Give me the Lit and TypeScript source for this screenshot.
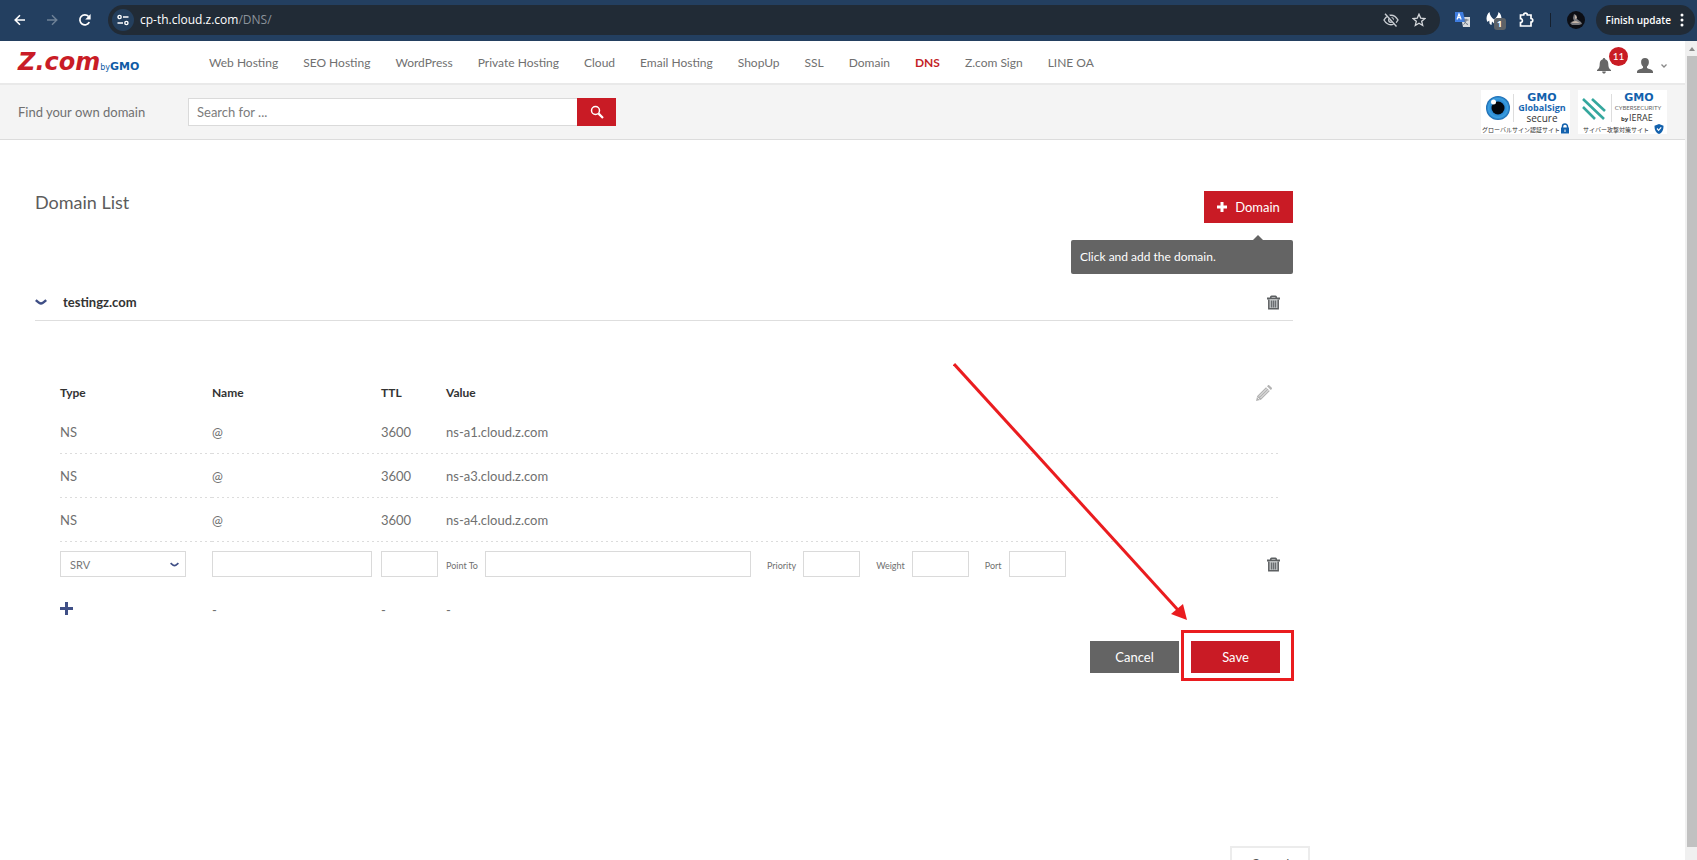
import { LitElement, html, css, svg } from "lit";
import { customElement, state } from "lit/decorators.js";
import { classMap } from "lit/directives/class-map.js";

const SITE_FONT = css`"Century Gothic", Lato, sans-serif`;

const trashIcon = svg`<path fill="#5d6062" d="M4.500 0h4a1.500 1.500 0 0 1 1.500 1.500V2h3v2H0V2h3v-.500A1.500 1.500 0 0 1 4.500 0zM4.600 1.400V2h3.800v-.600z"/><path fill="#c9ccce" stroke="#5d6062" stroke-width="1.500" d="M1.800 4v9.200h9.400V4"/><path fill="none" stroke="#6a6e71" stroke-width="1.400" d="M4.500 5v7M6.500 5v7M8.500 5v7"/>`;

@customElement("browser-bar")
class BrowserBar extends LitElement {
  static styles = css`
    :host {
      display: flex;
      align-items: center;
      height: 41px;
      padding: 0 2px 2px 14px;
      box-sizing: border-box;
      background: #233f60;
      color: #fff;
      font-family: "Open Sans", sans-serif;
    }
    button {
      display: flex;
      padding: 0;
      border: 0;
      background: none;
      color: inherit;
      font: inherit;
    }
    .history {
      display: flex;
      align-items: center;
      gap: 20px;
      margin-right: 16px;
    }
    .address {
      display: flex;
      flex: 1;
      align-items: center;
      height: 30px;
      margin-right: 15px;
      padding: 0 14px 0 4px;
      border-radius: 15px;
      background: #212b36;
    }
    .site {
      align-items: center;
      justify-content: center;
      width: 22px;
      height: 22px;
      border-radius: 50%;
      background: #243f5d;
    }
    .url {
      flex: 1;
      min-width: 0;
      margin: 0 6px;
      font-size: 12px;
      line-height: 20px;
    }
    .path {
      color: #8c939b;
    }
    .marks {
      display: flex;
      gap: 13px;
    }
    .tools {
      display: flex;
      align-items: center;
      gap: 16px;
    }
    .counted {
      position: relative;
    }
    .count {
      position: absolute;
      left: 8px;
      top: 6px;
      width: 12px;
      height: 12px;
      border-radius: 3px;
      background: #5d6267;
      font-size: 9px;
      font-weight: 700;
      line-height: 12px;
    }
    .divider {
      width: 1px;
      height: 14px;
      background: #15202e;
    }
    .update {
      align-items: center;
      gap: 9px;
      height: 30px;
      margin-left: -5px;
      padding: 0 11px 0 10px;
      border-radius: 15px;
      background: #212b36;
      font-size: 10px;
      font-weight: 600;
    }
  `;

  render() {
    return html`
      <div class="history">
        <button aria-label="Back">
          <svg width="12" height="12" viewBox="0 0 12 12" fill="none" stroke="#fff" stroke-width="1.600"><path d="M11 6H1.500M6 1.200L1.200 6L6 10.800" /></svg>
        </button>
        <button aria-label="Forward">
          <svg width="12" height="12" viewBox="0 0 12 12" fill="none" stroke="#6f8297" stroke-width="1.400"><path d="M1 6h9.500M6 1.200L10.800 6L6 10.800" /></svg>
        </button>
        <button aria-label="Reload">
          <svg width="14" height="14" viewBox="0 0 14 14"><path fill="none" stroke="#fff" stroke-width="1.700" d="M11.300 9.200A5 5 0 1 1 10.600 3.500" /><path fill="#fff" d="M12.600 1v5.400H7.200z" /></svg>
        </button>
      </div>
      <div class="address">
        <button class="site" aria-label="Site information">
          <svg width="12" height="12" viewBox="0 0 12 12" fill="none" stroke="#fff" stroke-width="1.400"><circle cx="2.600" cy="3" r="1.600" /><path d="M6 3h5.500M.5 9h5.500" /><circle cx="9.400" cy="9" r="1.600" /></svg>
        </button>
        <div class="url">cp-th.cloud.z.com<span class="path">/DNS/</span></div>
        <div class="marks">
          <button aria-label="Third-party cookies blocked">
            <svg width="16" height="14" viewBox="0 0 16 14" fill="none" stroke="#c9cdd2" stroke-width="1.400"><path d="M1 7C3 3.500 5.300 2.200 8 2.200S13 3.500 15 7c-2 3.500-4.300 4.800-7 4.800S3 10.500 1 7z" /><circle cx="8" cy="7" r="2.300" /><path stroke="#212b36" stroke-width="3" d="M3 .5l11 12.500" /><path d="M2 .8l11.500 12.700" /></svg>
          </button>
          <button aria-label="Bookmark this tab">
            <svg width="14" height="14" viewBox="0 0 14 14" fill="none" stroke="#d5d8dc" stroke-width="1.300"><path d="M7 1.200l1.700 3.900 4.200.4-3.200 2.800 1 4.200L7 10.300l-3.700 2.200 1-4.200L1.100 5.500l4.200-.4z" /></svg>
          </button>
        </div>
      </div>
      <div class="tools">
        <button aria-label="Translate">
          <svg width="15" height="15" viewBox="0 0 15 15"><path fill="#d8dbdf" d="M6 5h9v10H8z" /><path fill="#3f7de0" d="M0 0h8l2.500 10H0z" /><path fill="none" stroke="#fff" stroke-width="1.200" d="M2 7.500L4 2l2.200 5.500M2.800 5.700h2.600" /><path fill="none" stroke="#68727e" d="M8.500 8h5M11 6.800V8c0 2-1 3.500-2.500 4.500M9.500 9.500c.8 1.500 2 2.500 3.500 3" /></svg>
        </button>
        <button class="counted" aria-label="Protection extension">
          <svg width="16" height="15" viewBox="0 0 16 15"><path fill="#fff" d="M3.500 0C3.800 3 5.500 5.500 8 7.500 10.500 5.500 12.200 3 12.500 0 15 2 15.500 4.500 15.500 7L11 14l-1-4.500L8 11.500 6 9.500 5.500 13C4.800 12.800 4 12.300 3.600 11.800L3.200 8.500 1.500 10C.8 8.800.5 7.600.5 6.500.500 4 1.500 1.500 3.500 0z" /></svg>
          <span class="count">1</span>
        </button>
        <button aria-label="Extensions">
          <svg width="16" height="16" viewBox="0 0 16 16" fill="none" stroke="#fff" stroke-width="1.700"><path d="M2.500 3h3.200c0-2.400 3.600-2.400 3.600 0h3.700v3.500c2.300 0 2.300 3.500 0 3.500v4H2.500v-3.300c2.500 0 2.500-4 0-4z" /></svg>
        </button>
        <span class="divider"></span>
        <button aria-label="Profile">
          <svg width="18" height="18" viewBox="0 0 18 18"><circle cx="9" cy="9" r="9" fill="#0c0e14" /><path fill="#77787d" d="M7 3l2 1 1 4 4 3 1 2-3 1H5l-2-2 4-2-1-3z" /><path fill="#c4b5a8" d="M8 5l1-1 1 3-2 1zM4 11l5-1 4 2H6z" /></svg>
        </button>
        <button class="update">
          Finish update
          <svg width="4" height="14" viewBox="0 0 4 14" fill="#fff"><circle cx="2" cy="2" r="1.500" /><circle cx="2" cy="7" r="1.500" /><circle cx="2" cy="12" r="1.500" /></svg>
        </button>
      </div>
    `;
  }
}

@customElement("site-header")
class SiteHeader extends LitElement {
  static styles = css`
    :host {
      display: block;
      color: #707070;
      font-family: ${SITE_FONT};
    }
    a {
      color: inherit;
      text-decoration: none;
    }
    button {
      padding: 0;
      border: 0;
      background: none;
    }
    .top {
      display: flex;
      align-items: center;
      height: 42px;
      padding: 0 18px;
      border-bottom: 2px solid #e9e9e9;
      background: #fff;
    }
    .logo {
      display: flex;
      align-items: baseline;
      width: 191px;
      flex: none;
      color: #0f5ba5;
      font-family: "DejaVu Sans", sans-serif;
      font-weight: 700;
    }
    .brand {
      color: #c91c26;
      font-size: 24px;
      font-style: italic;
      line-height: 30px;
    }
    .by {
      font-size: 8px;
      font-weight: 400;
    }
    .group {
      font-size: 11px;
    }
    nav {
      display: flex;
      flex: 1;
      gap: 25px;
      padding-top: 2px;
      font-size: 12px;
      line-height: 20px;
      white-space: nowrap;
    }
    .current {
      color: #c31f28;
      font-weight: 700;
    }
    .account {
      display: flex;
      align-items: center;
      gap: 26px;
      padding-top: 8px;
    }
    .account button {
      display: flex;
      position: relative;
      align-items: center;
      gap: 8px;
    }
    .badge {
      position: absolute;
      left: 12px;
      top: -11px;
      width: 19px;
      height: 19px;
      border-radius: 50%;
      background: #c91c24;
      color: #fff;
      font: 10px/19px ${SITE_FONT};
      text-align: center;
    }
    .finder {
      display: flex;
      align-items: center;
      height: 54px;
      padding: 0 18px;
      border-bottom: 1px solid #dcdcdc;
      background: #f4f4f4;
    }
    label {
      width: 170px;
      flex: none;
      font-size: 13px;
    }
    .search {
      display: flex;
      height: 28px;
      flex: 0 1 428px;
    }
    input {
      flex: 1;
      min-width: 0;
      box-sizing: border-box;
      padding: 0 8px;
      border: 1px solid #dadada;
      border-right: 0;
      border-radius: 0;
      background: #fff;
      font: 13px ${SITE_FONT};
    }
    input::placeholder {
      color: #7c7c7c;
      opacity: 1;
    }
    .go {
      display: flex;
      align-items: center;
      justify-content: center;
      width: 39px;
      background: #c91b25;
    }
    .seals {
      display: flex;
      gap: 8px;
      margin-left: auto;
    }
    .seals svg {
      display: block;
      background: #fff;
    }
    .wide {
      font: 700 11px "DejaVu Sans", sans-serif;
      fill: #1261ad;
    }
    .sign {
      font: 700 9px "Open Sans", sans-serif;
      fill: #1867b2;
    }
    .secure {
      font: 10px "Open Sans", sans-serif;
      fill: #333;
    }
    .cyber {
      font: 6px Lato, sans-serif;
      fill: #666;
    }
    .bylabel {
      font: 700 6px "Open Sans", sans-serif;
      fill: #333;
    }
    .ierae {
      font: 9px "Open Sans", sans-serif;
      fill: #333;
    }
    .jp {
      font: 6px "Noto Sans CJK JP", sans-serif;
      fill: #333;
    }
  `;

  private items = ["Web Hosting", "SEO Hosting", "WordPress", "Private Hosting", "Cloud", "Email Hosting", "ShopUp", "SSL", "Domain", "DNS", "Z.com Sign", "LINE OA"];

  render() {
    return html`
      <header class="top">
        <a class="logo" href="#"><span class="brand">Z.com</span><span class="by">by</span><span class="group">GMO</span></a>
        <nav>${this.items.map((name) => html`<a href="#" class=${classMap({ current: name === "DNS" })}>${name}</a>`)}</nav>
        <div class="account">
          <button aria-label="Notifications">
            <svg width="14" height="16" viewBox="0 0 14 16" fill="#666"><path d="M7 0c.9 0 1.200.6 1.200 1.300C10.500 2 11.300 4 11.300 6c0 3 .7 4.700 2.700 6v1H0v-1c2-1.300 2.700-3 2.700-6 0-2 .8-4 3.100-4.700C5.800.6 6.100 0 7 0zM5.200 13.600h3.600C8.800 15 8 15.600 7 15.600s-1.800-.6-1.800-2z" /></svg>
            <span class="badge">11</span>
          </button>
          <button aria-label="Account">
            <svg width="16" height="16" viewBox="0 0 16 16" fill="#666"><path d="M8 0c2.500 0 3.900 1.600 3.900 4 0 2-.8 3.700-1.900 4.600v1.500c1 1 6 1.200 6 3.900v1H0v-1c0-2.700 5-2.900 6-3.900V8.600C4.900 7.700 4.100 6 4.100 4 4.100 1.600 5.500 0 8 0z" /></svg>
            <svg width="6" height="4" viewBox="0 0 6 4" fill="none" stroke="#888" stroke-width="1.300"><path d="M.5.5L3 3L5.500.5" /></svg>
          </button>
        </div>
      </header>
      <div class="finder">
        <label for="find">Find your own domain</label>
        <div class="search">
          <input id="find" type="text" placeholder="Search for ..." />
          <button class="go" aria-label="Search">
            <svg width="14" height="14" viewBox="0 0 14 14" fill="none" stroke="#fff" stroke-width="1.500"><circle cx="5.500" cy="5.500" r="4" /><path stroke-width="2.200" d="M8.600 8.600L13 13" /></svg>
          </button>
        </div>
        <div class="seals">
          <svg width="89" height="44" viewBox="0 0 89 44" role="img" aria-label="GMO GlobalSign secure">
            <defs><radialGradient id="iris"><stop offset=".4" stop-color="#1c78c8" /><stop offset=".8" stop-color="#3b9ee0" /><stop offset="1" stop-color="#1665ad" /></radialGradient></defs>
            <circle cx="17" cy="18" r="12" fill="url(#iris)" /><circle cx="17" cy="18" r="6.500" fill="#03070d" /><circle cx="12.500" cy="12" r="2.500" fill="#fff" />
            <path stroke="#ddd" d="M32.500 4v28" />
            <text class="wide" x="61" y="11" text-anchor="middle">GMO</text>
            <text class="sign" x="61" y="21" text-anchor="middle">GlobalSign</text>
            <text class="secure" x="61" y="32" text-anchor="middle">secure</text>
            <text class="jp" x="1" y="42">グローバルサイン認証サイト</text>
            <path fill="#1261ad" d="M80 37.500h8v6h-8z" /><path fill="none" stroke="#1261ad" stroke-width="1.500" d="M81.500 38v-1.500a2.500 2.500 0 0 1 5 0V38" /><path stroke="#fff" d="M84 39.500v2.500" />
          </svg>
          <svg width="89" height="44" viewBox="0 0 89 44" role="img" aria-label="GMO Cybersecurity by IERAE">
            <g stroke="#35a79e" stroke-width="2.600"><path d="M5 17l12 12M5 9l21 20M14 9l13 12" /></g>
            <path stroke="#ddd" d="M33.500 4v28" />
            <text class="wide" x="61" y="11" text-anchor="middle">GMO</text>
            <text class="cyber" x="60" y="20" text-anchor="middle">CYBERSECURITY</text>
            <text class="bylabel" x="43" y="31">by</text>
            <text class="ierae" x="51" y="31">IERAE</text>
            <text class="jp" x="5" y="42">サイバー攻撃対策サイト</text>
            <path fill="#1261ad" d="M81 34l4.500 1.700c0 4-1 6.800-4.500 8.300-3.500-1.500-4.500-4.300-4.500-8.300z" /><path fill="none" stroke="#fff" stroke-width="1.200" d="M79 38.500l1.600 1.800 2.600-3" />
          </svg>
        </div>
      </div>
    `;
  }
}

@customElement("dns-editor")
class DnsEditor extends LitElement {
  static styles = css`
    :host {
      display: block;
      max-width: 1258px;
      margin: 0 35px;
      padding-top: 51px;
      color: #707070;
      font-family: ${SITE_FONT};
      font-size: 13px;
    }
    button {
      padding: 0;
      border: 0;
      background: none;
      color: inherit;
      font: inherit;
    }
    svg {
      display: block;
    }
    .head {
      display: flex;
      justify-content: space-between;
      align-items: flex-start;
    }
    h1 {
      margin: 0;
      color: #5c5c5c;
      font-size: 18px;
      font-weight: 400;
      line-height: 22px;
    }
    .adder {
      position: relative;
    }
    .solid {
      display: flex;
      align-items: center;
      justify-content: center;
      gap: 8px;
      width: 89px;
      height: 32px;
      background: #c91b25;
      color: #fff;
    }
    .grey {
      background: #646464;
    }
    .tip {
      position: absolute;
      top: 49px;
      right: 0;
      width: 222px;
      box-sizing: border-box;
      padding: 0 9px;
      border-radius: 2px;
      background: #646464;
      color: #fff;
      font-size: 12px;
      line-height: 34px;
    }
    .tip::before {
      content: "";
      position: absolute;
      top: -5px;
      right: 30px;
      border: 5px solid transparent;
      border-top: 0;
      border-bottom-color: #646464;
    }
    .domain {
      display: flex;
      align-items: center;
      height: 36px;
      margin-top: 61px;
      padding-right: 13px;
      border-bottom: 1px solid #dedede;
    }
    .domain h2 {
      flex: 1;
      margin: 0 0 0 16px;
      color: #333;
      font-size: 13px;
    }
    .zone {
      margin: 54px 13px 0 25px;
    }
    table {
      width: 100%;
      border-collapse: collapse;
      table-layout: fixed;
    }
    th,
    td {
      box-sizing: border-box;
      height: 44px;
      padding: 0;
      text-align: left;
    }
    th {
      height: 35px;
      color: #333;
      font-size: 12px;
    }
    .type {
      width: 152px;
    }
    .name {
      width: 169px;
    }
    .ttl {
      width: 65px;
    }
    .tool {
      width: 24px;
    }
    .tool button {
      display: block;
      margin-left: auto;
    }
    .tool .pencil {
      margin-right: 8px;
    }
    .record td {
      background: repeating-linear-gradient(90deg, #dcdcdc 0 2px, transparent 2px 5px) bottom / 100% 1px no-repeat;
    }
    .blank td {
      height: 48px;
    }
    input,
    select {
      display: block;
      box-sizing: border-box;
      height: 26px;
      margin: 0;
      border: 1px solid #dadada;
      border-radius: 0;
      background: #fff;
      color: #777;
      font: 11px ${SITE_FONT};
    }
    .pick {
      display: grid;
      width: 126px;
      align-items: center;
    }
    .pick > * {
      grid-area: 1 / 1;
    }
    .pick svg {
      justify-self: end;
      margin-right: 7px;
      pointer-events: none;
    }
    select {
      width: 100%;
      padding: 0 9px;
      appearance: none;
    }
    .long {
      width: 160px;
    }
    .short {
      width: 57px;
    }
    .point {
      width: 266px;
    }
    .fields {
      display: flex;
      gap: 16px;
    }
    .fields label {
      display: flex;
      align-items: flex-end;
      gap: 7px;
      font-size: 9px;
      line-height: 22px;
      white-space: nowrap;
    }
    .actions {
      display: flex;
      justify-content: flex-end;
      gap: 12px;
      margin: 7px 13px 0 0;
    }
    .marked {
      position: relative;
    }
    .frame {
      position: absolute;
      inset: -11px -14px -8px -10px;
      border: 3px solid #ea1c1f;
      pointer-events: none;
    }
    .arrow {
      position: absolute;
      right: 93px;
      bottom: 53px;
      pointer-events: none;
    }
    .later {
      display: flex;
      justify-content: flex-end;
      margin: 173px -17px 0 0;
    }
    .outline {
      width: 80px;
      height: 36px;
      border: 2px solid #ececec;
      background: #fff;
      color: #555;
    }
  `;

  @state() private records = [
    { type: "NS", name: "@", ttl: 3600, value: "ns-a1.cloud.z.com" },
    { type: "NS", name: "@", ttl: 3600, value: "ns-a3.cloud.z.com" },
    { type: "NS", name: "@", ttl: 3600, value: "ns-a4.cloud.z.com" },
  ];

  private chevron(size: number) {
    return html`<svg width=${size} height=${size} viewBox="0 0 12 12" fill="none" stroke="#3f4f86" stroke-width="2.400"><path d="M.8 4.200C3 6.300 4.500 7.500 6 7.500S9 6.300 11.200 4.200" /></svg>`;
  }

  private trash(label: string) {
    return html`<button aria-label=${label}><svg width="13" height="15" viewBox="0 0 13 14">${trashIcon}</svg></button>`;
  }

  render() {
    return html`
      <div class="head">
        <h1>Domain List</h1>
        <div class="adder">
          <button class="solid">
            <svg width="10" height="10" viewBox="0 0 10 10" stroke="#fff" stroke-width="3"><path d="M5 0v10M0 5h10" /></svg>
            Domain
          </button>
          <div class="tip" role="tooltip">Click and add the domain.</div>
        </div>
      </div>
      <div class="domain">
        <button aria-label="Collapse">${this.chevron(12)}</button>
        <h2>testingz.com</h2>
        ${this.trash("Delete domain")}
      </div>
      <div class="zone">
        <table>
          <thead>
            <tr>
              <th class="type">Type</th>
              <th class="name">Name</th>
              <th class="ttl">TTL</th>
              <th>Value</th>
              <th class="tool">
                <button class="pencil" aria-label="Edit">
                  <svg width="16" height="16" viewBox="0 0 16 16"><path fill="#b3b3b3" d="M0 16l1.200-5L10 2.200l3.800 3.800L5 14.800zM11 1.200l.8-.8c.5-.5 1.100-.5 1.600 0l2.200 2.200c.5.500.5 1.100 0 1.600l-.8.800z" /><path stroke="#fff" stroke-width=".8" d="M3 11.500l8-8M4.500 13l8-8M1.500 12.500l2 2" /></svg>
                </button>
              </th>
            </tr>
          </thead>
          <tbody>
            ${this.records.map((r) => html`
              <tr class="record">
                <td>${r.type}</td>
                <td>${r.name}</td>
                <td>${r.ttl}</td>
                <td>${r.value}</td>
                <td></td>
              </tr>`)}
            <tr>
              <td>
                <div class="pick">
                  <select aria-label="Type"><option>SRV</option></select>
                  ${this.chevron(9)}
                </div>
              </td>
              <td><input class="long" type="text" aria-label="Name" /></td>
              <td><input class="short" type="text" aria-label="TTL" /></td>
              <td>
                <div class="fields">
                  <label>Point To <input class="point" type="text" /></label>
                  <label>Priority <input class="short" type="text" /></label>
                  <label>Weight <input class="short" type="text" /></label>
                  <label>Port <input class="short" type="text" /></label>
                </div>
              </td>
              <td class="tool">${this.trash("Delete record")}</td>
            </tr>
            <tr class="blank">
              <td>
                <button aria-label="Add record"><svg width="13" height="13" viewBox="0 0 13 13" stroke="#3f4f86" stroke-width="3"><path d="M6.500 0v13M0 6.500h13" /></svg></button>
              </td>
              <td>-</td>
              <td>-</td>
              <td>-</td>
              <td></td>
            </tr>
          </tbody>
        </table>
      </div>
      <div class="actions">
        <button class="solid grey">Cancel</button>
        <div class="marked">
          <button class="solid">Save</button>
          <div class="frame"></div>
          <svg class="arrow" width="234" height="257" viewBox="0 0 234 257"><path stroke="#ea1c1f" stroke-width="3" d="M1 1L225 247" /><path fill="#ea1c1f" d="M234 257L218 251L230 241z" /></svg>
        </div>
      </div>
      <div class="later"><button class="outline">Cancel</button></div>
    `;
  }
}

@customElement("app-root")
class AppRoot extends LitElement {
  static styles = css`
    :host {
      display: flex;
      flex-direction: column;
      height: 100vh;
      overflow: hidden;
      background: #fff;
    }
    browser-bar {
      flex: none;
    }
    .window {
      display: flex;
      flex: 1;
      min-height: 0;
    }
    .page {
      flex: 1;
      min-width: 0;
      overflow: hidden;
    }
    .scroll {
      display: flex;
      flex-direction: column;
      align-items: flex-end;
      width: 12px;
      padding: 6px 0 13px;
      box-sizing: border-box;
      background: #f0f0f0;
    }
    .up {
      width: 6px;
      height: 4px;
      margin: 0 2px 5px;
    }
    .thumb {
      flex: 1;
      width: 10px;
      background: #c1c1c1;
    }
  `;

  render() {
    return html`
      <browser-bar></browser-bar>
      <div class="window">
        <div class="page">
          <site-header></site-header>
          <main><dns-editor></dns-editor></main>
        </div>
        <div class="scroll" aria-hidden="true">
          <svg class="up" viewBox="0 0 6 4" fill="#8a8a8a"><path d="M3 0l3 4H0z" /></svg>
          <div class="thumb"></div>
        </div>
      </div>
    `;
  }
}
